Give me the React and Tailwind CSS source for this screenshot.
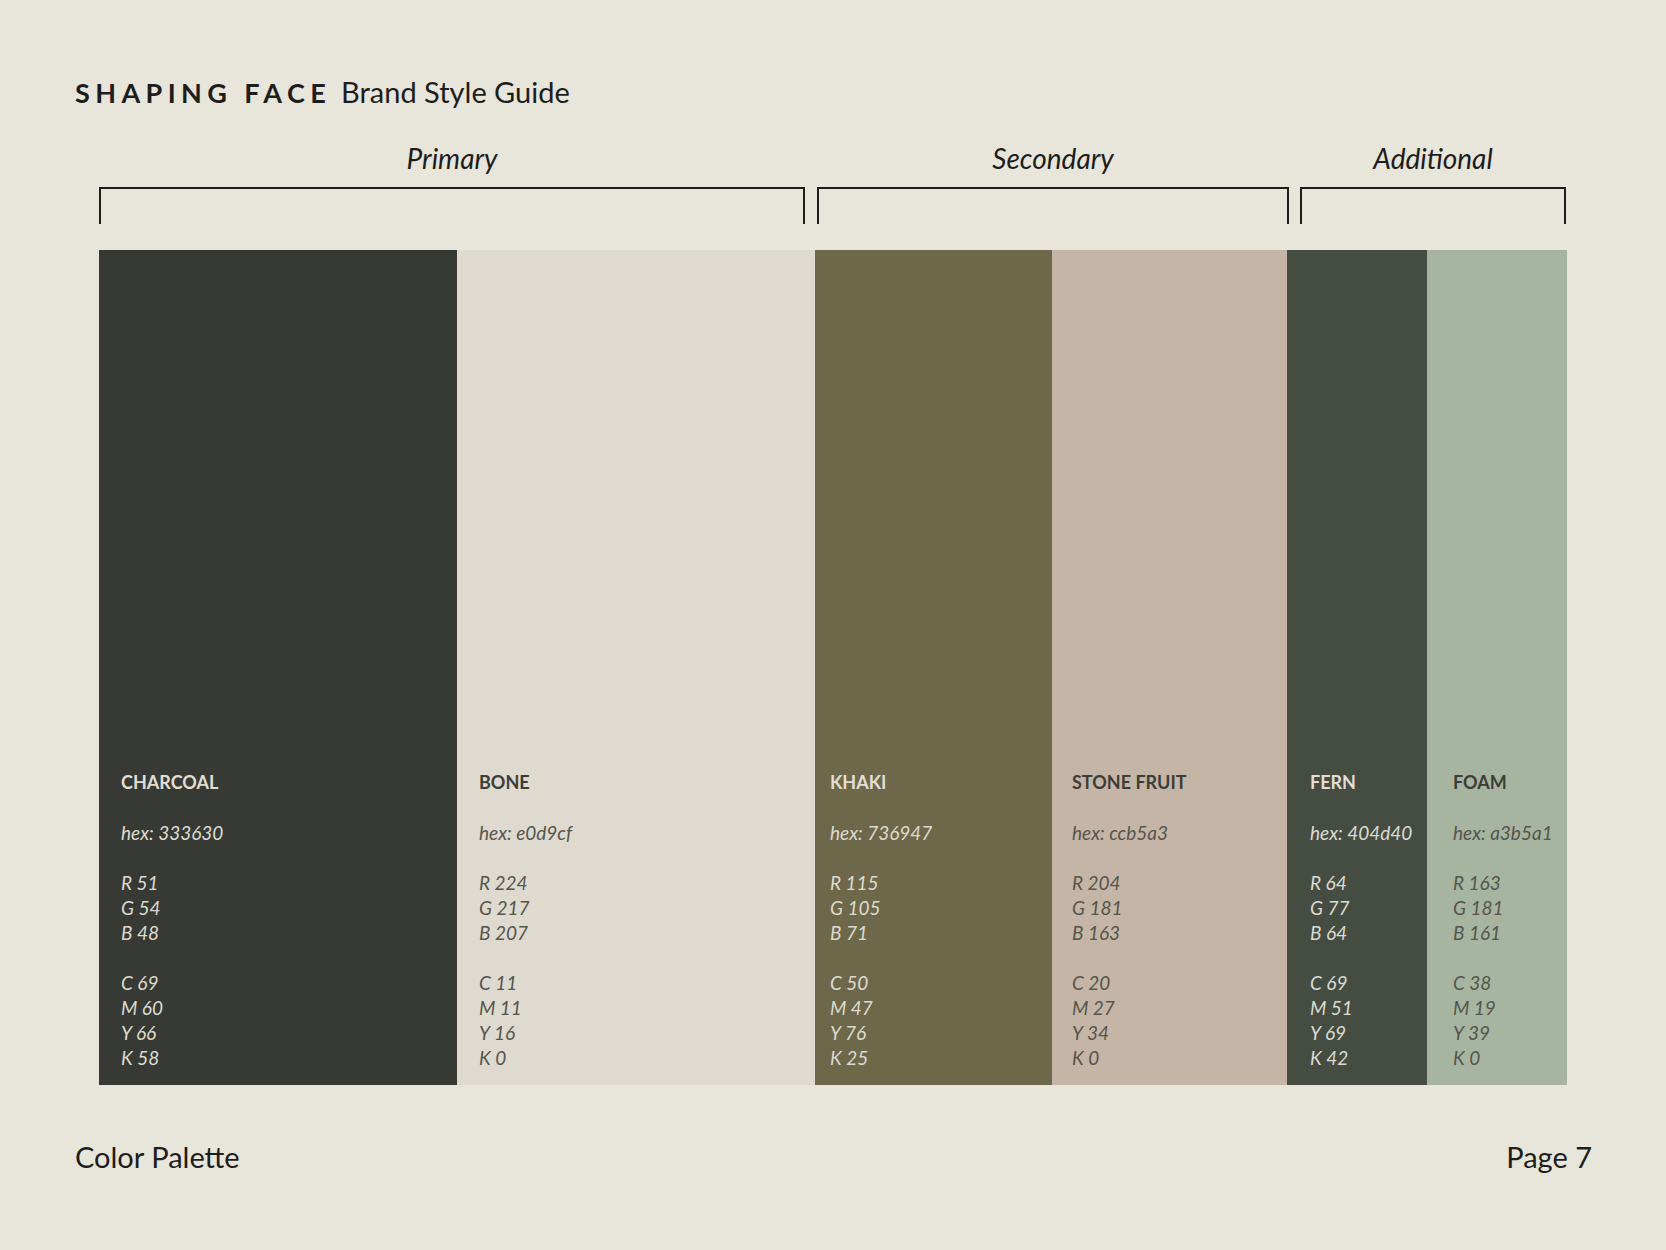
const sw = [
  { n: "CHARCOAL", hex: "333630", bg: "#373a34", rgb: [51, 54, 48], cmyk: [69, 60, 66, 58], w: 358, dark: true, pl: 22 },
  { n: "BONE", hex: "e0d9cf", bg: "#dedad0", rgb: [224, 217, 207], cmyk: [11, 11, 16, 0], w: 358, dark: false, pl: 22 },
  { n: "KHAKI", hex: "736947", bg: "#6d684a", rgb: [115, 105, 71], cmyk: [50, 47, 76, 25], w: 237, dark: true, pl: 15 },
  { n: "STONE FRUIT", hex: "ccb5a3", bg: "#c5b5a6", rgb: [204, 181, 163], cmyk: [20, 27, 34, 0], w: 235, dark: false, pl: 20 },
  { n: "FERN", hex: "404d40", bg: "#454d43", rgb: [64, 77, 64], cmyk: [69, 51, 69, 42], w: 140, dark: true, pl: 23 },
  { n: "FOAM", hex: "a3b5a1", bg: "#a7b4a0", rgb: [163, 181, 161], cmyk: [38, 19, 39, 0], w: 140, dark: false, pl: 26 },
];

export default function App() {
  const font = { fontFamily: "Lato, 'Open Sans', sans-serif" };
  return (
    <div className="w-[1666px] h-[1250px] bg-[#e8e5da] flex flex-col text-[#1d1d1b]" style={font}>
      <div className="pl-[75px] mt-[70px] flex items-baseline h-[40px]">
        <span className="font-bold text-[27px] tracking-[0.2em]">SHAPING FACE</span>
        <span className="text-[29px] ml-[10px]">Brand Style Guide</span>
      </div>
      <div className="ml-[99px] mt-[28px] flex">
        {[["Primary", 706, 12], ["Secondary", 472, 11], ["Additional", 266, 0]].map(([l, w, g]) => (
          <div key={l} className="flex flex-col" style={{ width: w, marginRight: g }}>
            <div className="text-center italic text-[28px] h-[40px] leading-[40px]">{l}</div>
            <div className="mt-[9px] h-[37px] border-t-2 border-l-2 border-r-2 border-[#1d1d1b]" />
          </div>
        ))}
      </div>
      <div className="ml-[99px] mt-[26px] flex h-[835px]">
        {sw.map((s) => (
          <div key={s.n} className="flex flex-col justify-end pb-[15px] text-[19px] leading-[25px]"
            style={{ width: s.w, paddingLeft: s.pl, background: s.bg, color: s.dark ? "#dedad0" : "#55554c" }}>
            <div className="font-bold text-[18px]" style={{ color: s.dark ? "#e2ded3" : "#3d3d38" }}>{s.n}</div>
            <div className="italic mt-[25px]">hex: {s.hex}</div>
            <div className="italic mt-[25px]">
              {["R", "G", "B"].map((k, i) => <div key={k}>{k} {s.rgb[i]}</div>)}
            </div>
            <div className="italic mt-[25px]">
              {["C", "M", "Y", "K"].map((k, i) => <div key={k}>{k} {s.cmyk[i]}</div>)}
            </div>
          </div>
        ))}
      </div>
      <div className="flex justify-between pl-[75px] pr-[74px] mt-[50px] text-[29px]">
        <span>Color Palette</span>
        <span>Page 7</span>
      </div>
    </div>
  );
}
